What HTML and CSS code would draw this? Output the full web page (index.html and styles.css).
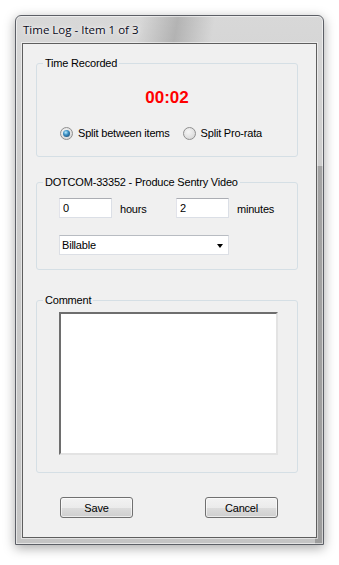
FILE: index.html
```html
<!DOCTYPE html>
<html lang="en">
<head>
    <meta charset="UTF-8">
    <meta name="viewport" content="width=device-width, initial-scale=1.0">
    <link rel="stylesheet" href="styles.css">
</head>
<body>
    <div class="window">
        <div class="titlebar">Time Log - Item 1 of 3</div>
        <div class="client">
            <div class="group recorded">
                <span class="group-title">Time Recorded</span>
                <div class="elapsed">00:02</div>
                <div class="split-options">
                    <label class="option"><span class="radio checked"><span class="dot"></span></span>Split between items</label>
                    <label class="option"><span class="radio"></span>Split Pro-rata</label>
                </div>
            </div>

            <div class="group item">
                <span class="group-title">DOTCOM-33352 - Produce Sentry Video</span>
                <div class="duration-row">
                    <input type="text" class="textbox" value="0">
                    <span class="unit">hours</span>
                    <input type="text" class="textbox" value="2">
                    <span class="unit">minutes</span>
                </div>
                <div class="combo">
                    <span>Billable</span>
                    <span class="combo-arrow"></span>
                </div>
            </div>

            <div class="group comment">
                <span class="group-title">Comment</span>
                <textarea class="comment-box"></textarea>
            </div>

            <div class="buttons">
                <button>Save</button>
                <button>Cancel</button>
            </div>
        </div>
    </div>
</body>
</html>
```

FILE: styles.css
```css
body {
    margin: 0;
    padding: 15px;
    background: #fff;
    font-family: "Liberation Sans", Arial, sans-serif;
    font-size: 11px;
    letter-spacing: -0.2px;
    color: #000;
}
.window {
    width: 309px;
    height: 530px;
    box-sizing: border-box;
    display: flex;
    flex-direction: column;
    padding: 0 6px 6px 6px;
    border: 1px solid #5c5f66;
    border-radius: 6px 6px 0 0;
    background:
        linear-gradient(100deg, rgba(255,255,255,0) 40%, rgba(0,0,0,0.17) 52%, rgba(255,255,255,0) 64%) top / 100% 28px no-repeat,
        linear-gradient(to right, rgba(0,0,0,0) calc(100% - 8px), rgba(0,0,0,0.2) calc(100% - 8px)) 0 150px / 100% 100% no-repeat,
        linear-gradient(to bottom, #d8d8d8 0%, #cdcdcd 30%, #c4c4c4 100%);
    box-shadow: 0 3px 12px rgba(0,0,0,0.35), inset 0 0 0 1px rgba(255,255,255,0.55);
}
.titlebar {
    height: 27px;
    line-height: 27px;
    padding-left: 1px;
    font-family: "Open Sans", "Noto Sans", sans-serif;
    font-size: 11.5px;
    letter-spacing: 0;
    color: #0a0a1a;
    text-shadow: 0 0 6px rgba(255,255,255,0.9), 0 0 3px rgba(255,255,255,0.9);
}
.client {
    flex: 1;
    background: #f0f0f0;
    border: 1px solid #5e5e5e;
    box-shadow: 0 0 0 1px rgba(255,255,255,0.5);
}

/* group boxes */
.group {
    position: relative;
    box-sizing: border-box;
    width: 262px;
    margin-left: 13px;
    border: 1px solid #d5dfe5;
    border-radius: 3px;
}
.group-title {
    position: absolute;
    top: -7px;
    left: 6px;
    padding: 0 2px;
    line-height: 13px;
    background: #f0f0f0;
}
.recorded {
    margin-top: 19px;
    height: 94px;
    padding-top: 24px;
}
.item {
    margin-top: 25px;
    height: 88px;
    padding: 15px 0 0 22px;
}
.comment {
    margin-top: 30px;
    height: 173px;
    padding: 11px 0 0 22px;
}

/* time recorded */
.elapsed {
    text-align: center;
    font-size: 17px;
    font-weight: bold;
    line-height: 20px;
    letter-spacing: 0;
    color: #ff0000;
}
.split-options {
    display: flex;
    height: 16px;
    margin-top: 17px;
    padding-left: 23px;
}
.option {
    display: flex;
    align-items: center;
    gap: 5px;
}
.option + .option {
    margin-left: 13px;
}
.radio {
    width: 13px;
    height: 13px;
    box-sizing: border-box;
    border-radius: 50%;
    border: 1px solid #8f8f8f;
    background: radial-gradient(circle at 40% 35%, #f6f6f6 0%, #e2e2e2 55%, #cfcfcf 100%);
    display: flex;
    align-items: center;
    justify-content: center;
}
.radio .dot {
    width: 7px;
    height: 7px;
    border-radius: 50%;
    background: radial-gradient(circle at 40% 35%, #b8ecff 0%, #3b8fc4 40%, #12395e 100%);
}

/* item duration */
.duration-row {
    display: grid;
    grid-template-columns: 53px 64px 53px auto;
    align-items: center;
}
.textbox {
    box-sizing: border-box;
    width: 53px;
    height: 20px;
    margin: 0;
    padding: 0 3px;
    font-family: inherit;
    font-size: 11px;
    background: #fff;
    border: 1px solid #dbdfe6;
    border-top-color: #abadb3;
    border-left-color: #e2e3ea;
    outline: none;
}
.unit {
    padding-left: 8px;
    padding-top: 2px;
}
.combo {
    display: flex;
    align-items: center;
    justify-content: space-between;
    box-sizing: border-box;
    width: 170px;
    height: 20px;
    margin-top: 17px;
    padding: 0 5px 0 2px;
    background: #fff;
    border: 1px solid #dcdfe5;
    border-top-color: #b8bcc2;
}
.combo-arrow {
    width: 0;
    height: 0;
    border-left: 3.5px solid transparent;
    border-right: 3.5px solid transparent;
    border-top: 4px solid #000;
    margin-top: 1px;
}

/* comment */
.comment-box {
    display: block;
    box-sizing: border-box;
    width: 219px;
    height: 143px;
    margin: 0;
    resize: none;
    background: #fff;
    border-style: solid;
    border-width: 2px;
    border-color: #6e6e6e #e3e3e3 #e3e3e3 #6e6e6e;
    outline: none;
}

/* buttons */
.buttons {
    display: flex;
    gap: 72px;
    margin-top: 24px;
    padding-left: 37px;
}
button {
    box-sizing: border-box;
    width: 73px;
    height: 21px;
    padding: 0;
    font-family: inherit;
    font-size: 11px;
    letter-spacing: -0.2px;
    color: #000;
    border: 1px solid #707070;
    border-radius: 3px;
    background: linear-gradient(to bottom, #f2f2f2 0%, #ebebeb 50%, #dddddd 51%, #cfcfcf 100%);
    box-shadow: inset 0 0 0 1px rgba(255,255,255,0.6);
}
```
